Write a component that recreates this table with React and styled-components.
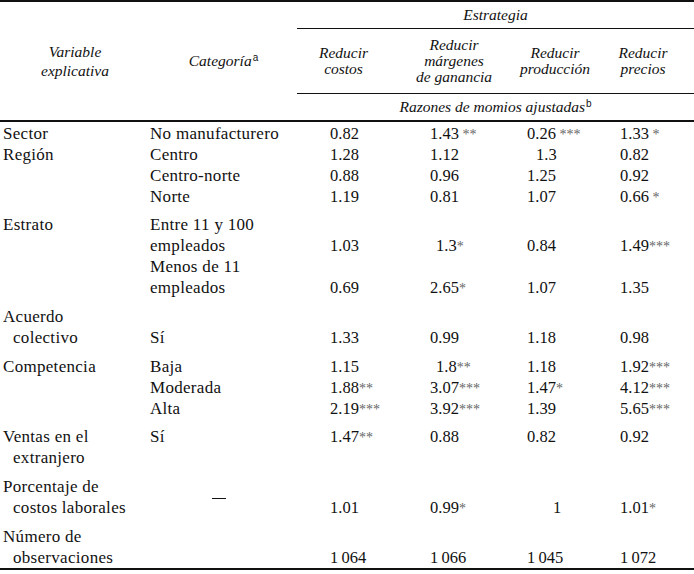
import React from 'react';
import styled, { createGlobalStyle } from 'styled-components';

const serif = '"Liberation Serif", "DejaVu Serif", "Times New Roman", serif';

const GlobalStyle = createGlobalStyle`
  body {
    margin: 0;
    background: #fff;
    color: #111;
    font-family: ${serif};
  }
`;

const Table = styled.table`
  width: 694px;
  table-layout: fixed;
  border-collapse: separate;
  border-spacing: 0;
  border-top: 2px solid #111;
  border-bottom: 2px solid #111;
  font-family: ${serif};
  font-size: 16.5px;
  color: #111;
`;

const HeadCell = styled.th`
  padding: ${(p) => p.$pad || '0'};
  font-family: ${serif};
  font-weight: normal;
  font-style: italic;
  font-size: 15.5px;
  text-align: center;
  vertical-align: middle;
  line-height: ${(p) => p.$lh || 16}px;
  border-bottom: ${(p) => p.$rule || 'none'};
`;

const Sup = styled.sup`
  font-family: "Liberation Sans", Arial, sans-serif;
  font-style: normal;
  font-size: 10px;
  vertical-align: 5px;
  line-height: 0;
  margin-left: 1px;
`;

const Cell = styled.td`
  padding: ${(p) => p.$gap || 0}px ${(p) => p.$right || 0}px 0 ${(p) => p.$left || 0}px;
  font-family: ${serif};
  line-height: 21px;
  vertical-align: ${(p) => p.$va || 'top'};
  text-align: ${(p) => p.$align || 'left'};
  white-space: nowrap;
`;

const TextCell = styled(Cell)`
  font-size: 17px;
  letter-spacing: 0.3px;
`;

const VarName = styled.div`
  padding-left: 13px;
  text-indent: -10px;
`;

const Stars = styled.span`
  font-size: 14px;
  line-height: 0;
  color: #666;
`;

const Dash = styled.span`
  display: inline-block;
  width: 14px;
  border-top: 1px solid #111;
  vertical-align: middle;
`;

const pads = [33, 40, 9, 28];

const groups = [
  { name: ['Sector'], gap: 1, rows: [
    { cat: ['No manufacturero'], vals: ['0.82', '1.43 **', '0.26 ***', '1.33 *'] },
  ] },
  { name: ['Región'], gap: 0, rows: [
    { cat: ['Centro'], vals: ['1.28', '1.12', { v: '1.3', s: 9 }, '0.82'] },
    { cat: ['Centro-norte'], vals: ['0.88', '0.96', '1.25', '0.92'] },
    { cat: ['Norte'], vals: ['1.19', '0.81', '1.07', '0.66 *'] },
  ] },
  { name: ['Estrato'], gap: 7, rows: [
    { cat: ['Entre 11 y 100', 'empleados'], va: 'bottom', vals: ['1.03', { v: '1.3*', s: 6 }, '0.84', '1.49***'] },
    { cat: ['Menos de 11', 'empleados'], va: 'bottom', vals: ['0.69', '2.65*', '1.07', '1.35'] },
  ] },
  { name: ['Acuerdo', 'colectivo'], gap: 8, rows: [
    { cat: ['Sí'], catVa: 'bottom', va: 'bottom', vals: ['1.33', '0.99', '1.18', '0.98'] },
  ] },
  { name: ['Competencia'], gap: 8, rows: [
    { cat: ['Baja'], vals: ['1.15', { v: '1.8**', s: 6 }, '1.18', '1.92***'] },
    { cat: ['Moderada'], vals: ['1.88**', '3.07***', '1.47*', '4.12***'] },
    { cat: ['Alta'], vals: ['2.19***', '3.92***', '1.39', '5.65***'] },
  ] },
  { name: ['Ventas en el', 'extranjero'], gap: 7, rows: [
    { cat: ['Sí'], vals: ['1.47**', '0.88', '0.82', '0.92'] },
  ] },
  { name: ['Porcentaje de', 'costos laborales'], gap: 8, rows: [
    { dash: true, va: 'bottom', vals: ['1.01', '0.99*', { v: '1', s: 26 }, '1.01*'] },
  ] },
  { name: ['Número de', 'observaciones'], gap: 8, rows: [
    { cat: [], va: 'bottom', vals: ['1\u2009064', '1\u2009066', '1\u2009045', '1\u2009072'] },
  ] },
];

function Lines({ items }) {
  return items.map((t, i) => (
    <React.Fragment key={i}>
      {i > 0 && <br />}
      {t}
    </React.Fragment>
  ));
}

function Value({ value }) {
  const raw = typeof value === 'string' ? value : value.v;
  const m = raw.match(/^(.*?)(\s?\*+)?$/);
  return (
    <>
      {m[1]}
      {m[2] && <Stars>{m[2]}</Stars>}
    </>
  );
}

function GroupRows({ group }) {
  return group.rows.map((row, r) => {
    const gap = r === 0 ? group.gap : 0;
    return (
      <tr key={r}>
        {r === 0 && (
          <TextCell rowSpan={group.rows.length} $gap={gap}>
            <VarName><Lines items={group.name} /></VarName>
          </TextCell>
        )}
        {row.dash ? (
          <TextCell $gap={gap} $va="middle" $align="center" $right={10}>
            <Dash />
          </TextCell>
        ) : (
          <TextCell $gap={gap} $va={row.catVa}>
            <Lines items={row.cat} />
          </TextCell>
        )}
        {row.vals.map((v, i) => (
          <Cell
            key={i}
            $gap={gap}
            $va={row.va}
            $left={pads[i] + (typeof v === 'string' ? 0 : v.s)}
          >
            <Value value={v} />
          </Cell>
        ))}
      </tr>
    );
  });
}

export default function App() {
  return (
    <>
      <GlobalStyle />
      <Table>
        <colgroup>
          <col style={{ width: 150 }} />
          <col style={{ width: 147 }} />
          <col style={{ width: 93 }} />
          <col style={{ width: 128 }} />
          <col style={{ width: 74 }} />
          <col style={{ width: 102 }} />
        </colgroup>
        <thead>
          <tr>
            <HeadCell rowSpan={3} $lh={19} $rule="2px solid #111">
              Variable<br />explicativa
            </HeadCell>
            <HeadCell rowSpan={3} $rule="2px solid #111">
              Categoría<Sup>a</Sup>
            </HeadCell>
            <HeadCell colSpan={4} $lh={26} $rule="1px solid #111">
              Estrategia
            </HeadCell>
          </tr>
          <tr>
            <HeadCell $pad="8px 0" $rule="1px solid #111">Reducir<br />costos</HeadCell>
            <HeadCell $pad="8px 0" $rule="1px solid #111">Reducir<br />márgenes<br />de ganancia</HeadCell>
            <HeadCell $pad="8px 0" $rule="1px solid #111">Reducir<br />producción</HeadCell>
            <HeadCell $pad="8px 0" $rule="1px solid #111">Reducir<br />precios</HeadCell>
          </tr>
          <tr>
            <HeadCell colSpan={4} $lh={26} $rule="2px solid #111">
              Razones de momios ajustadas<Sup>b</Sup>
            </HeadCell>
          </tr>
        </thead>
        <tbody>
          {groups.map((g, i) => (
            <GroupRows key={i} group={g} />
          ))}
        </tbody>
      </Table>
    </>
  );
}
